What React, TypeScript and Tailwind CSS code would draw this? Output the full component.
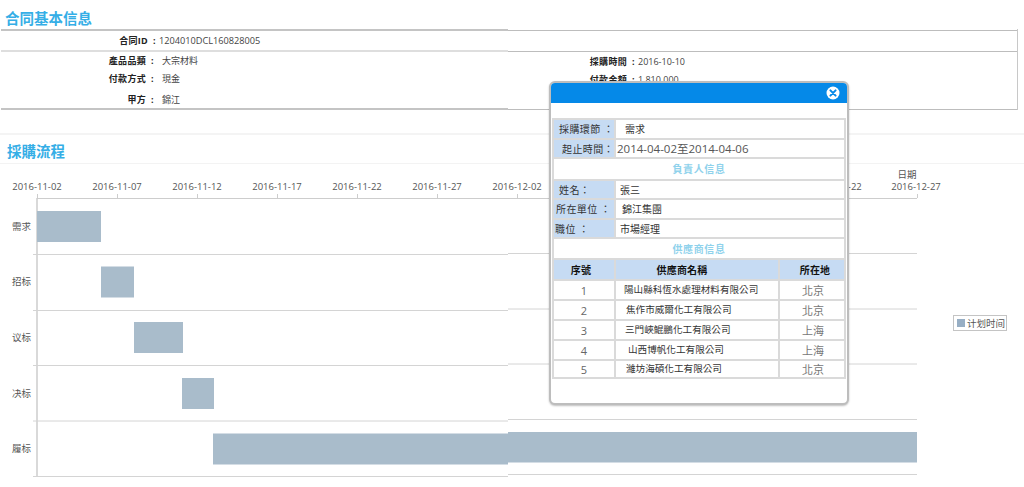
const ticks = [
  '2016-11-02', '2016-11-07', '2016-11-12', '2016-11-17', '2016-11-22', '2016-11-27',
  '2016-12-02', '', '', '', '2016-12-22', '2016-12-27',
];

const stages = [
  { name: '需求', y: 230 },
  { name: '招标', y: 285 },
  { name: '议标', y: 341 },
  { name: '决标', y: 397 },
  { name: '履标', y: 452 },
];

const bars = [
  { x: 37, y: 211, w: 64, h: 31 },
  { x: 101, y: 266.5, w: 33, h: 31 },
  { x: 134, y: 322, w: 49, h: 31 },
  { x: 182, y: 378, w: 32, h: 31 },
  { x: 213, y: 433.5, w: 295, h: 31 },
  { x: 508, y: 432, w: 409, h: 30.5 },
];

const gridLeft = [254.5, 310.5, 365.5, 421, 476.5];
const gridRight = [253.5, 309, 364, 419.5, 474.5];

const suppliers = [
  { no: 1, name: '陽山縣科恆水處理材料有限公司', pad: 'pl-[8px]', city: '北京', h: 'h-[20px]' },
  { no: 2, name: '焦作市威爾化工有限公司', pad: 'pl-[10px]', city: '北京', h: 'h-[20px]' },
  { no: 3, name: '三門峽鯤鵬化工有限公司', pad: 'pl-[9px]', city: '上海', h: 'h-[20px]' },
  { no: 4, name: '山西博帆化工有限公司', pad: 'pl-[12px]', city: '上海', h: 'h-[20px]' },
  { no: 5, name: '濰坊海碩化工有限公司', pad: 'pl-[10px]', city: '北京', h: 'h-[18px]' },
];

function Rule({ thick }: { thick: string }) {
  return (
    <div className="flex h-[2px] items-end">
      <div className={`ml-[1px] w-[507px] ${thick}`} />
      <div className="h-[1px] flex-1 bg-[#bdbdbd]" />
    </div>
  );
}

function Info({ label, value, className, labelWidth = 'w-[146px]', valueClass = 'text-[9px]' }: { label: string; value: string; className: string; labelWidth?: string; valueClass?: string }) {
  return (
    <div className={`flex items-center ${className}`}>
      <span className={`${labelWidth} text-right text-[9px] font-bold tracking-[0.3px] text-[#222]`}>{label}</span>
      <span className="w-[13px] pl-[5px] text-[9px] font-bold text-[#222]">:</span>
      <span className={`text-[#444] ${valueClass}`}>{value}</span>
    </div>
  );
}

function Chart() {
  return (
    <svg viewBox="0 164 1024 323" className="block h-[323px] w-[1024px]">
      <line x1="37" y1="198.5" x2="917" y2="198.5" stroke="#cdcdcd" />
      <line x1="37" y1="198" x2="37" y2="476.5" stroke="#cdcdcd" strokeWidth="1.5" />
      {ticks.map((t, i) => {
        const x = 37 + i * 80;
        return (
          <g key={i}>
            <line x1={x + 0.5} y1="194" x2={x + 0.5} y2="198" stroke="#cdcdcd" />
            {t && <text x={i === 11 ? 916 : x} y="189.5" textAnchor="middle" fontSize="9.5" fill="#555">{t}</text>}
          </g>
        );
      })}
      <text x="907" y="178" textAnchor="middle" fontSize="9.5" fill="#555">日期</text>
      {gridLeft.map((y) => (
        <line key={y} x1="33" y1={y} x2="508" y2={y} stroke="#d4d4d4" />
      ))}
      {gridRight.map((y) => (
        <line key={y} x1="508" y1={y} x2="917" y2={y} stroke="#d4d4d4" />
      ))}
      {stages.map((s) => (
        <text key={s.name} x="12" y={s.y} fontSize="9.5" fill="#555">{s.name}</text>
      ))}
      {bars.map((b) => (
        <rect key={b.x} x={b.x} y={b.y} width={b.w} height={b.h} fill="#a9bccb" />
      ))}
      <rect x="953.5" y="315.5" width="53" height="15" fill="#fff" stroke="#c4c4c4" />
      <rect x="957" y="319" width="8" height="8" fill="#97aec4" />
      <text x="967" y="327" fontSize="9.5" fill="#555">计划时间</text>
    </svg>
  );
}

function LabelRow({ label, children, h, labelClass }: { label: string; children: React.ReactNode; h: string; labelClass: string }) {
  return (
    <tr className={h}>
      <td className={`whitespace-nowrap border-2 border-[#dadada] bg-[#c6dbf3] p-0 text-[10px] leading-none tracking-[0.4px] text-[#333] ${labelClass}`}>{label}</td>
      <td colSpan={2} className="whitespace-nowrap border-2 border-[#dadada] p-0 text-[10px] leading-none text-[#333]">{children}</td>
    </tr>
  );
}

function Modal() {
  return (
    <div className="absolute left-[549px] top-[81px] h-[324px] w-[300px] overflow-hidden rounded-[6px] border-2 border-[#bdbdbd] bg-white shadow-[0_1px_2px_rgba(0,0,0,0.25)]">
      <div className="flex h-[20px] items-center justify-end bg-[#0589e8] pr-[7px]">
        <svg width="14" height="14" viewBox="0 0 14 14">
          <circle cx="7" cy="7" r="6.5" fill="#fff" />
          <path d="M4.4 4.4l5.2 5.2M9.6 4.4l-5.2 5.2" stroke="#0589e8" strokeWidth="2" strokeLinecap="round" />
        </svg>
      </div>
      <table className="ml-[1px] mt-[15px] w-[292px] table-fixed border-collapse">
        <colgroup>
          <col className="w-[62px]" />
          <col className="w-[164px]" />
          <col className="w-[66px]" />
        </colgroup>
        <tbody>
          <LabelRow label="採購環節 ：" h="h-[20px]" labelClass="pl-[5px]"><span className="pl-[9px]">需求</span></LabelRow>
          <LabelRow label="起止時間：" h="h-[19px]" labelClass="pl-[8px]"><span className="pl-[1px] text-[11.5px] text-[#555]">2014-04-02至2014-04-06</span></LabelRow>
          <tr className="h-[22px]">
            <td colSpan={3} className="border-2 border-[#dadada] p-0 text-center text-[10px] font-bold leading-none tracking-[0.6px] text-[#8fd2ec]">負責人信息</td>
          </tr>
          <LabelRow label="姓名：" h="h-[19px]" labelClass="pl-[5px]"><span className="pl-[4px]">張三</span></LabelRow>
          <LabelRow label="所在單位 ：" h="h-[20px]" labelClass="pl-[2px]"><span className="pl-[6px]">錦江集團</span></LabelRow>
          <LabelRow label="職位 ：" h="h-[19px]" labelClass="pl-[1px]"><span className="pl-[4px]">市場經理</span></LabelRow>
          <tr className="h-[21px]">
            <td colSpan={3} className="border-2 border-[#dadada] p-0 text-center text-[10px] font-bold leading-none tracking-[0.6px] text-[#8fd2ec]">供應商信息</td>
          </tr>
          <tr className="h-[21px] bg-[#c6dbf3] text-center text-[10px] font-bold leading-none tracking-[0.2px] text-[#111]">
            <td className="border-2 border-[#dadada] p-0 pr-[6px]">序號</td>
            <td className="border-2 border-[#dadada] p-0 pr-[30px]">供應商名稱</td>
            <td className="border-2 border-[#dadada] p-0 pl-[6px]">所在地</td>
          </tr>
          {suppliers.map((s) => (
            <tr key={s.no} className={`leading-none ${s.h}`}>
              <td className="border-2 border-[#dadada] p-0 text-center text-[11px] text-[#666]">{s.no}</td>
              <td className={`whitespace-nowrap border-2 border-[#dadada] p-0 text-[9.6px] text-[#333] ${s.pad}`}>{s.name}</td>
              <td className="border-2 border-[#dadada] p-0 pl-[22px] text-[11px] text-[#777]">{s.city}</td>
            </tr>
          ))}
        </tbody>
      </table>
    </div>
  );
}

export default function App() {
  return (
    <div className="relative h-[487px] w-[1024px] overflow-hidden bg-white font-['Open_Sans','Noto_Sans_CJK_TC',sans-serif]">
      <h2 className="h-[29px] pl-[5px] pt-[9px] text-[14.5px] font-bold leading-[20px] text-[#35aee6]">合同基本信息</h2>
      <div className="w-[1018px] border-r border-[#c8c8c8]">
        <Rule thick="h-[2px] bg-[#c4c4c4]" />
        <Info label="合同ID" value="1204010DCL160828005" className="h-[19px]" labelWidth="w-[148px]" valueClass="-ml-[2px] text-[9.2px]" />
        <Rule thick="h-[2px] bg-[#dedede]" />
        <div className="flex h-[56px]">
          <div className="w-[481px]">
            <Info label="產品品類" value="大宗材料" className="h-[17px]" valueClass="pl-[3px] text-[9px]" />
            <Info label="付款方式" value="現金" className="h-[20px]" valueClass="pl-[3px] text-[9px]" />
            <Info label="甲方" value="錦江" className="h-[19px] pt-[3px]" valueClass="pl-[3px] text-[9px]" />
          </div>
          <div className="flex-1">
            <Info label="採購時間" value="2016-10-10" className="h-[19px]" valueClass="-ml-[2px] text-[9px]" />
            <Info label="付款金額" value="1,810,000" className="h-[17px]" valueClass="-ml-[2px] text-[9px]" />
          </div>
        </div>
        <Rule thick="h-[2px] bg-[#c4c4c4]" />
      </div>
      <div className="mt-[23px] h-[2px] bg-[#f4f4f4]" />
      <h2 className="h-[28px] pl-[7px] pt-[7px] text-[14.5px] font-bold leading-[20px] text-[#35aee6]">採購流程</h2>
      <div className="h-[1px] bg-[#f3f3f3]" />
      <Chart />
      <Modal />
    </div>
  );
}
